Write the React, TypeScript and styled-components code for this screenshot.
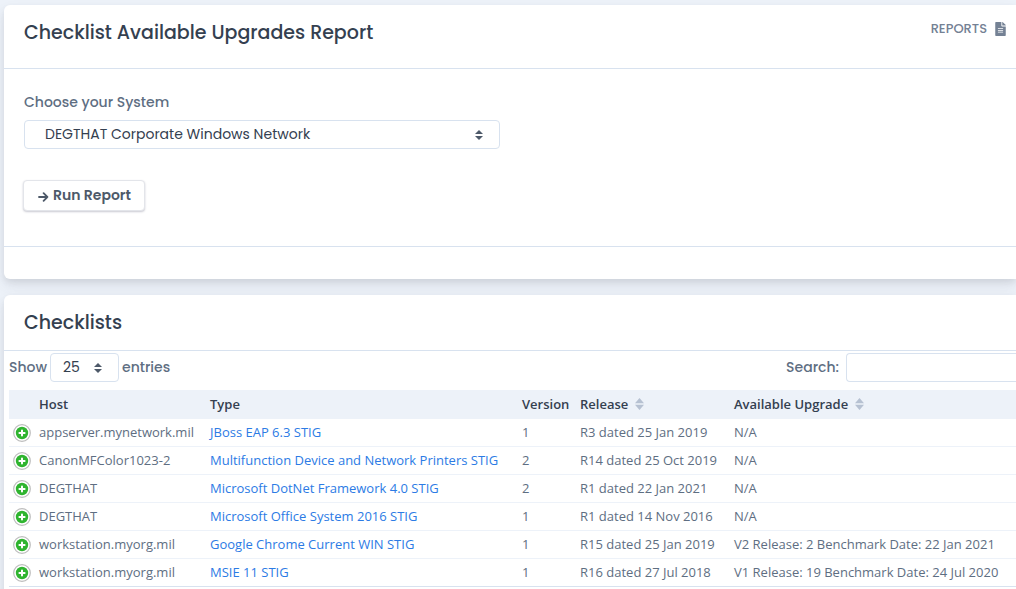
import React from "react";
import styled, { createGlobalStyle } from "styled-components";
import { FaFileAlt } from "react-icons/fa";

const heading = `"Poppins", "Inter", "Liberation Sans", sans-serif`;
const text = `"Open Sans", "Noto Sans", sans-serif`;

const GlobalStyle = createGlobalStyle`
  *, *::before, *::after { box-sizing: border-box; }
  body {
    margin: 0;
    background: #edf2f9;
    color: #5e6e82;
    font-family: ${text};
    font-size: 13px;
    line-height: 20px;
    overflow-x: hidden;
  }
`;

const Page = styled.main`
  display: flex;
  flex-direction: column;
  gap: 16px;
  padding: 5px 0 0 4px;
`;

const Card = styled.section`
  background: #fff;
  border-radius: 6px 0 0 6px;
  box-shadow: 0 7px 14px 0 rgba(65, 69, 88, 0.1), 0 3px 6px 0 rgba(0, 0, 0, 0.07);
`;

const CardHeader = styled.header<{ $tall?: boolean }>`
  display: flex;
  justify-content: space-between;
  align-items: flex-start;
  padding: ${(p) => (p.$tall ? "14px 10px 21px 20px" : "14px 10px 13px 20px")};
  border-bottom: 1px solid #d8e2ef;
`;

const Title = styled.h1`
  margin: 0;
  color: #344050;
  font: 500 19px/28px ${heading};
`;

const ReportsLink = styled.a`
  display: flex;
  align-items: center;
  gap: 8px;
  color: #748194;
  font: 500 13px/20px ${heading};
  text-decoration: none;

  svg { width: 11px; height: 14px; }
`;

const CardBody = styled.form`
  display: flex;
  flex-direction: column;
  align-items: flex-start;
  padding: 24px 20px 35px;
`;

const Label = styled.label`
  padding-bottom: 2px;
  color: #5e6e82;
  font: 500 14px/18px ${heading};
`;

const SelectBox = styled.span<{ $wide?: boolean }>`
  position: relative;
  display: block;
  width: ${(p) => (p.$wide ? "476px" : "69px")};
  max-width: 100%;
  margin-top: ${(p) => (p.$wide ? "7px" : "0")};

  svg {
    position: absolute;
    top: 10px;
    right: 16px;
    color: #4d5969;
    pointer-events: none;
  }
`;

const Select = styled.select<{ $indent: number }>`
  display: block;
  width: 100%;
  height: 29px;
  padding: 0 24px 2px ${(p) => p.$indent}px;
  appearance: none;
  background: #fff;
  border: 1px solid #d8e2ef;
  border-radius: 4px;
  color: #344050;
  font: 400 14px/20px ${heading};
`;

const RunButton = styled.button`
  display: flex;
  align-items: center;
  gap: 4px;
  height: 31px;
  margin: 31px 0 0 -1px;
  padding: 0 13px 2px 14px;
  background: #fff;
  border: 1px solid #e3e5ea;
  border-radius: 4px;
  box-shadow: 0 1px 2px rgba(43, 45, 80, 0.25);
  color: #4d5969;
  font: 600 14px/20px ${heading};
`;

const CardFooter = styled.footer`
  height: 33px;
  border-top: 1px solid #d8e2ef;
`;

const Controls = styled.div`
  display: flex;
  justify-content: space-between;
  padding: 2px 0 8px 5px;
`;

const Control = styled.div`
  display: flex;
  align-items: center;
  gap: 3px;
`;

const SearchControl = styled(Control)`
  gap: 7px;
`;

const SearchInput = styled.input`
  width: 170px;
  height: 29px;
  padding: 0 8px;
  border: 1px solid #d8e2ef;
  border-right: 0;
  border-radius: 4px 0 0 4px;
  color: #344050;
  font: 400 14px/20px ${heading};
`;

const TableArea = styled.div`
  padding: 0 0 16px 5px;
`;

const Table = styled.table`
  width: 100%;
  table-layout: fixed;
  border-collapse: separate;
  border-spacing: 0;
  border-bottom: 1px solid #d8e2ef;
`;

const Col = styled.col<{ $width?: number }>`
  width: ${(p) => (p.$width ? `${p.$width}px` : "auto")};
`;

const HeadCell = styled.th`
  height: 29px;
  padding: 0 0 2px 5px;
  background: #edf2f9;
  color: #344050;
  font-weight: 600;
  text-align: left;
  white-space: nowrap;
`;

const SortButton = styled.button`
  display: inline-flex;
  align-items: center;
  gap: 7px;
  padding: 0;
  border: 0;
  background: none;
  color: inherit;
  font: inherit;

  svg { color: #b6c1d2; }
`;

const Cell = styled.td`
  height: 28px;
  padding: 0 0 2px 5px;
  border-bottom: 1px solid #edf2f9;
  white-space: nowrap;

  tr:last-child > & { height: 27px; border-bottom: 0; }
`;

const StigLink = styled.a`
  color: #2c7be5;
  text-decoration: none;
`;

const ExpandButton = styled.button`
  display: block;
  width: 18px;
  height: 18px;
  margin: 3px 0 0 -1px;
  padding: 0;
  border: 0;
  background: none;

  svg { display: block; }
`;

const Carets = () => (
  <svg width="9" height="10" viewBox="0 0 9 10" fill="currentColor" aria-hidden="true">
    <path d="M4 0L8 4H0ZM0 6H8L4 10Z" />
  </svg>
);

const SortIcon = () => (
  <svg width="9" height="12" viewBox="0 0 9 12" fill="currentColor" aria-hidden="true">
    <path d="M4.5 0L9 5.2H0ZM0 6.8H9L4.5 12Z" />
  </svg>
);

const ArrowIcon = () => (
  <svg
    width="11"
    height="14"
    viewBox="0 0 11 14"
    fill="none"
    stroke="currentColor"
    strokeWidth="1.8"
    strokeLinecap="round"
    strokeLinejoin="round"
    aria-hidden="true"
  >
    <path d="M1 9H9.4M5.6 5.2L9.4 9L5.6 12.8" />
  </svg>
);

const PlusIcon = () => (
  <svg width="18" height="18" viewBox="0 0 18 18" aria-hidden="true">
    <circle cx="9" cy="9" r="8.3" fill="#fff" stroke="#bdbdbd" strokeWidth="1.2" />
    <circle cx="9" cy="9" r="6.2" fill="#2fb42f" />
    <path d="M9 6.4V11.6M6.4 9H11.6" stroke="#fff" strokeWidth="2" strokeLinecap="round" />
  </svg>
);

const rows = [
  ["appserver.mynetwork.mil", "JBoss EAP 6.3 STIG", "1", "R3 dated 25 Jan 2019", "N/A"],
  ["CanonMFColor1023-2", "Multifunction Device and Network Printers STIG", "2", "R14 dated 25 Oct 2019", "N/A"],
  ["DEGTHAT", "Microsoft DotNet Framework 4.0 STIG", "2", "R1 dated 22 Jan 2021", "N/A"],
  ["DEGTHAT", "Microsoft Office System 2016 STIG", "1", "R1 dated 14 Nov 2016", "N/A"],
  ["workstation.myorg.mil", "Google Chrome Current WIN STIG", "1", "R15 dated 25 Jan 2019", "V2 Release: 2 Benchmark Date: 22 Jan 2021"],
  ["workstation.myorg.mil", "MSIE 11 STIG", "1", "R16 dated 27 Jul 2018", "V1 Release: 19 Benchmark Date: 24 Jul 2020"],
];

export default function App() {
  return (
    <>
      <GlobalStyle />
      <Page>
        <Card>
          <CardHeader $tall>
            <Title>Checklist Available Upgrades Report</Title>
            <ReportsLink href="#reports">
              REPORTS <FaFileAlt aria-hidden="true" />
            </ReportsLink>
          </CardHeader>
          <CardBody onSubmit={(e) => e.preventDefault()}>
            <Label htmlFor="system">Choose your System</Label>
            <SelectBox $wide>
              <Select id="system" $indent={20}>
                <option>DEGTHAT Corporate Windows Network</option>
              </Select>
              <Carets />
            </SelectBox>
            <RunButton type="submit">
              <ArrowIcon />
              Run Report
            </RunButton>
          </CardBody>
          <CardFooter />
        </Card>
        <Card>
          <CardHeader>
            <Title as="h2">Checklists</Title>
          </CardHeader>
          <Controls>
            <Control>
              <Label htmlFor="count">Show</Label>
              <SelectBox>
                <Select id="count" $indent={12} defaultValue="25">
                  <option>25</option>
                </Select>
                <Carets />
              </SelectBox>
              <Label htmlFor="count">entries</Label>
            </Control>
            <SearchControl>
              <Label htmlFor="search">Search:</Label>
              <SearchInput id="search" type="search" />
            </SearchControl>
          </Controls>
          <TableArea>
            <Table>
              <colgroup>
                <Col $width={25} />
                <Col $width={171} />
                <Col $width={312} />
                <Col $width={58} />
                <Col $width={154} />
                <Col />
              </colgroup>
              <thead>
                <tr>
                  <HeadCell aria-label="Details" />
                  <HeadCell>Host</HeadCell>
                  <HeadCell>Type</HeadCell>
                  <HeadCell>Version</HeadCell>
                  <HeadCell>
                    <SortButton type="button">Release <SortIcon /></SortButton>
                  </HeadCell>
                  <HeadCell>
                    <SortButton type="button">Available Upgrade <SortIcon /></SortButton>
                  </HeadCell>
                </tr>
              </thead>
              <tbody>
                {rows.map(([host, type, version, release, upgrade], i) => (
                  <tr key={i}>
                    <Cell>
                      <ExpandButton type="button" aria-label={`Show details of ${host}`}>
                        <PlusIcon />
                      </ExpandButton>
                    </Cell>
                    <Cell>{host}</Cell>
                    <Cell><StigLink href="#checklist">{type}</StigLink></Cell>
                    <Cell>{version}</Cell>
                    <Cell>{release}</Cell>
                    <Cell>{upgrade}</Cell>
                  </tr>
                ))}
              </tbody>
            </Table>
          </TableArea>
        </Card>
      </Page>
    </>
  );
}
